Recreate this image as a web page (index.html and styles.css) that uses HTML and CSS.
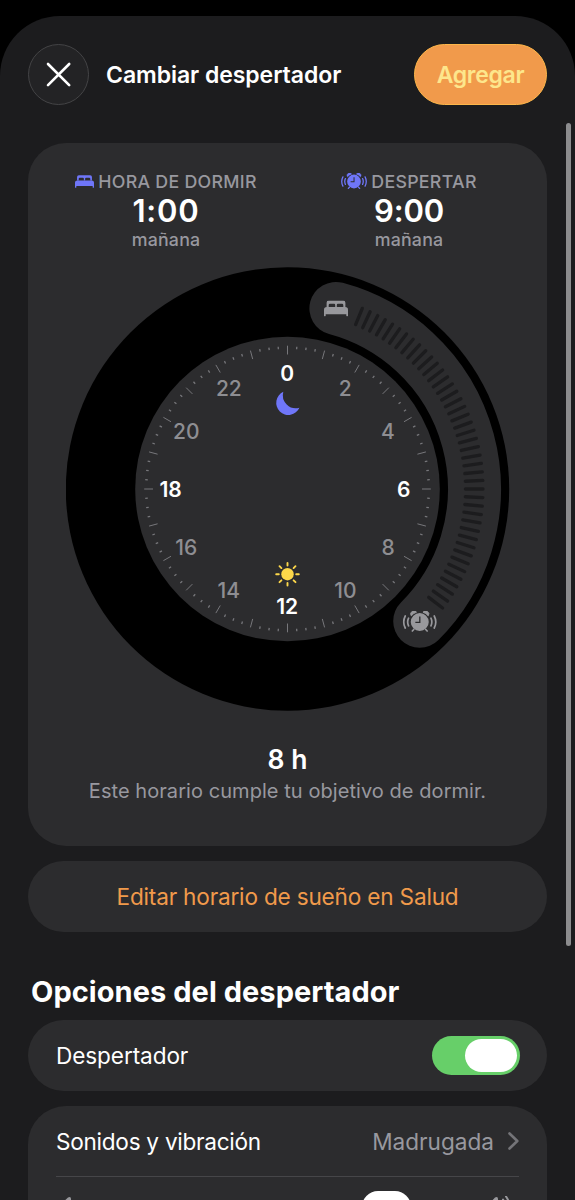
FILE: index.html
```html
<!DOCTYPE html>
<html lang="es">
<head>
<meta charset="utf-8">
<title>Cambiar despertador</title>
<link rel="stylesheet" href="styles.css">
</head>
<body>
<svg class="defs" width="0" height="0" aria-hidden="true">
  <symbol id="bed" viewBox="0 0 24 16">
    <path d="M2.6 6.6V2.2Q2.6 0 4.8 0H19.2Q21.4 0 21.4 2.2V6.6H19.3V4.6Q19.3 3.3 18 3.3H13.900Q12.8 3.300 12.8 4.600V6.600H11.200V4.600Q11.200 3.300 10.100 3.300H6Q4.700 3.300 4.700 4.600V6.600Z"/>
    <path d="M0 9.400Q0 6.600 2.800 6.600H21.200Q24 6.600 24 9.400V15.200Q24 16 23.200 16Q22.300 16 22.300 15.200V13.800H1.700V15.200Q1.700 16 .8 16Q0 16 0 15.200Z"/>
  </symbol>
  <symbol id="alarm" viewBox="0 0 34 22">
    <path fill-rule="evenodd" d="M17 2a9 9 0 1 1 0 18a9 9 0 1 1 0-18ZM16.400 5.600V10.700H12.600V12H17.700V5.600Z"/>
    <path d="M8.500 4.900A3.100 3.100 0 0 1 13.800 1.200Q10.500 2.300 8.500 4.900ZM25.500 4.900A3.100 3.100 0 0 0 20.200 1.200Q23.500 2.300 25.500 4.900Z" stroke="currentColor" stroke-width=".8"/>
    <g fill="none" stroke="currentColor" stroke-width="1.700" stroke-linecap="round">
      <path d="M11 18.500L9.600 20M23 18.500L24.400 20M5.800 7.200Q4 11 5.800 14.800M28.200 7.200Q30 11 28.200 14.800M2.500 5Q-.6 11 2.500 17M31.500 5Q34.600 11 31.500 17"/>
    </g>
  </symbol>
</svg>

<main class="sheet">
  <header class="bar">
    <button class="close" aria-label="Cerrar">
      <svg width="26" height="26" viewBox="0 0 26 26"><path d="M2 2L23.200 23.200M23.200 2L2 23.200"/></svg>
    </button>
    <h1 class="title">Cambiar despertador</h1>
    <button class="add"><span>Agregar</span></button>
  </header>

  <section class="card schedule">
    <div class="times">
      <div class="time">
        <div class="label"><svg class="bed-icon"><use href="#bed"/></svg><span class="sleep-label">HORA DE DORMIR</span></div>
        <div class="hour sleep-hour">1:00</div>
        <div class="part">mañana</div>
      </div>
      <div class="time">
        <div class="label"><svg class="alarm-icon"><use href="#alarm"/></svg><span class="wake-label">DESPERTAR</span></div>
        <div class="hour">9:00</div>
        <div class="part">mañana</div>
      </div>
    </div>

    <svg class="dial" viewBox="-221.500 -222 444 444">
      <circle class="ring" r="221.700"/>
      <circle class="face" r="152.300"/>
      <path class="track" d="M48.400 -180.600A187 187 0 0 1 132.200 132.200"/>
      <g id="grip"></g>
      <g id="ticks"></g>
      <g id="numbers"></g>
      <path class="moon" d="M-4.200 -97.200A12.100 12.100 0 1 0 11.900 -81.300A13 13 0 0 1 -4.200 -97.200Z"/>
      <g class="sun">
        <circle cy="85.200" r="6.200"/>
        <path d="M0 73.900v2.600M0 93.900v2.600M-11.300 85.200h2.600M8.700 85.200h2.600M-8 77.200l1.900 1.900M6.100 91.300l1.900 1.900M-8 93.200l1.900-1.900M6.100 79.100l1.900-1.900"/>
      </g>
      <use class="marker" href="#bed" x="36.500" y="-188.500" width="24" height="16"/>
      <use class="marker" href="#alarm" x="115" y="122" width="34.500" height="22"/>
    </svg>

    <p class="total">8 h</p>
    <p class="goal">Este horario cumple tu objetivo de dormir.</p>
  </section>

  <button class="card edit"><span>Editar horario de sueño en Salud</span></button>

  <h2 class="heading">Opciones del despertador</h2>

  <div class="card row single">
    <span class="alarm-name">Despertador</span>
    <span class="switch"><span class="knob"></span></span>
  </div>

  <section class="card group">
    <div class="row sound">
      <span class="sound-name">Sonidos y vibración</span>
      <span class="value">Madrugada</span>
      <svg class="chevron" width="11" height="18" viewBox="0 0 11 18"><path d="M1.500 1.500L9.300 9L1.500 16.500"/></svg>
    </div>
    <div class="volume">
      <svg class="speaker" width="20" height="24" viewBox="0 0 20 24"><path d="M2 8H7L14 1.500Q17 0 17 3V21Q17 24 14 22L7 16H2Z"/></svg>
      <span class="thumb"></span>
      <svg class="loud" width="34" height="24" viewBox="0 0 34 24"><path d="M1 8H6L12 1.500Q15 0 15 3V21Q15 24 12 22L6 16H1Z"/><path class="wave" d="M17 7Q20 12 17 17M20 3.500Q25 12 20 20.500M23 .5Q31 12 23 23"/></svg>
    </div>
  </section>
</main>
<div class="scrollbar"></div>
<script src="dial.js"></script>
</body>
</html>
```

FILE: styles.css
```css
* { box-sizing: border-box; }
html, body { margin: 0; height: 1200px; overflow: hidden; background: #000; }
body {
  position: relative;
  padding-top: 16px;
  font-family: Inter, "Liberation Sans", sans-serif;
  color: #fff;
}
button { border: 0; padding: 0; font: inherit; color: inherit; }
h1, h2, p { margin: 0; }
.defs { position: absolute; }
.sheet {
  height: 1184px;
  padding: 28px 28px 0;
  overflow: hidden;
  background: #1c1c1e;
  border-radius: 60px 60px 0 0;
}
.bar { display: flex; align-items: center; height: 61px; margin-bottom: 38px; }
.close {
  display: grid; place-items: center;
  width: 61px; height: 61px;
  border: 1px solid #444446; border-radius: 50%;
  background: #232325;
}
.close svg { fill: none; stroke: #fff; stroke-width: 2.600; stroke-linecap: round; }
.title { flex: 1; margin-left: 17px; font-size: 23px; font-weight: 600; line-height: 30px; letter-spacing: -.06px; white-space: nowrap; }
.add {
  width: 133px; height: 61px;
  border: 1.500px solid #fcb64a; border-radius: 31px;
  background: #f19a4b; color: #fde68c;
  font-size: 23px; font-weight: 600; letter-spacing: -.3px;
}

.card { background: #2c2c2e; }
.schedule {
  display: flex; flex-direction: column; align-items: center;
  height: 703px; padding-top: 27px; border-radius: 38px;
}
.times { display: grid; grid-template-columns: 243px 243px; height: 97px; text-align: center; }
.label {
  display: flex; align-items: center; justify-content: center; gap: 4px;
  height: 22px; color: #98989f; font-size: 17.800px; font-weight: 500; letter-spacing: .28px; white-space: nowrap;
}
.label svg { color: #6f76f8; fill: currentColor; flex: none; }
.bed-icon { width: 19px; height: 13px; }
.alarm-icon { width: 26px; height: 17px; }
.hour { height: 37px; line-height: 37px; font-size: 31px; font-weight: 600; letter-spacing: -.2px; }
.sleep-hour { letter-spacing: .8px; }
.part { height: 22px; line-height: 22px; color: #98989f; font-size: 17.800px; font-weight: 500; letter-spacing: .2px; }

.dial { display: block; width: 444px; height: 444px; }
.ring { fill: #000; }
.face { fill: #2c2c2e; }
.track { fill: none; stroke: #2c2c2e; stroke-width: 53; stroke-linecap: round; }
.grip { stroke: #1c1c1e; stroke-width: 3.300; stroke-linecap: round; }
.tick { stroke: #77777b; stroke-width: 1; }
.tick.minor { stroke-width: 1.300; }
.number { fill: #8e8e92; font-size: 21px; font-weight: 500; text-anchor: middle; }
.number.main { fill: #fff; font-weight: 600; }
.moon { fill: #6f76f8; }
.sun { fill: #fcd74a; stroke: none; }
.sun path { stroke: #fcd74a; stroke-width: 1.900; stroke-linecap: round; }
.marker { fill: #98989c; color: #98989c; }

.total { margin-top: 33px; height: 30px; line-height: 30px; font-size: 26.500px; font-weight: 600; }
.goal { margin-top: 3px; line-height: 28px; color: #98989f; font-size: 20px; letter-spacing: .06px; white-space: nowrap; }

.edit {
  display: block; width: 100%; height: 71px; margin-top: 15px;
  border-radius: 36px; color: #f19a4b; font-size: 22.600px; letter-spacing: -.19px; white-space: nowrap;
}
.heading { margin: 42px 0 10px 3px; height: 36px; line-height: 36px; font-size: 29px; font-weight: 700; letter-spacing: .05px; white-space: nowrap; }
.row { display: flex; align-items: center; padding: 0 28px; height: 71px; font-size: 22.600px; white-space: nowrap; }
.alarm-name { letter-spacing: -.1px; }
.sound-name { letter-spacing: -.27px; }
.single { justify-content: space-between; padding-right: 27px; border-radius: 36px; }
.switch {
  display: flex; justify-content: flex-end; align-items: center;
  width: 88px; height: 39px; padding-right: 3px;
  border-radius: 20px; background: #67cf69;
}
.knob { width: 52px; height: 33px; border-radius: 17px; background: #fff; }
.group { height: 120px; margin-top: 15px; border-radius: 38px 38px 0 0; }
.sound { padding: 0; margin: 0 28px; border-bottom: 1px solid #464649; }
.value { margin-left: auto; color: #98989f; }
.chevron { margin: 0 0 0 14px; fill: none; stroke: #747478; stroke-width: 2.600; stroke-linecap: round; stroke-linejoin: round; }
.volume { display: flex; padding: 14px 30px 0 26px; }
.volume svg { fill: #98989c; margin-top: 5px; }
.wave { fill: none; stroke: #98989c; stroke-width: 2; stroke-linecap: round; }
.thumb { width: 49px; height: 32px; margin-left: 288px; border-radius: 16px; background: #fff; }
.loud { margin-left: auto; }
.scrollbar {
  position: absolute; left: 566px; top: 123px;
  width: 5px; height: 823px; border-radius: 3px; background: #8c8c8e;
}
```

FILE: dial.js
```js
const NS = "http://www.w3.org/2000/svg";

function radial(parent, angle, inner, outer, className) {
  const line = document.createElementNS(NS, "line");
  const a = angle * Math.PI / 180;
  line.setAttribute("x1", inner * Math.sin(a));
  line.setAttribute("y1", -inner * Math.cos(a));
  line.setAttribute("x2", outer * Math.sin(a));
  line.setAttribute("y2", -outer * Math.cos(a));
  line.setAttribute("class", className);
  parent.appendChild(line);
}

const ticks = document.getElementById("ticks");
for (let i = 0; i < 96; i++) {
  const hour = i % 4 === 0;
  radial(ticks, i * 3.75, hour ? 134.5 : 140, hour ? 143.3 : 142.6, hour ? "tick" : "tick minor");
}

const grip = document.getElementById("grip");
for (let angle = 22.5; angle <= 127.5; angle += 2.5) {
  radial(grip, angle, 178, 195.5, "grip");
}

const numbers = document.getElementById("numbers");
for (let h = 0; h < 24; h += 2) {
  const a = h * 15 * Math.PI / 180;
  const text = document.createElementNS(NS, "text");
  text.setAttribute("x", 116.5 * Math.sin(a) - 0.4);
  text.setAttribute("y", -116.5 * Math.cos(a) + 8.2);
  text.setAttribute("class", h % 6 === 0 ? "number main" : "number");
  text.textContent = h;
  numbers.appendChild(text);
}
```
